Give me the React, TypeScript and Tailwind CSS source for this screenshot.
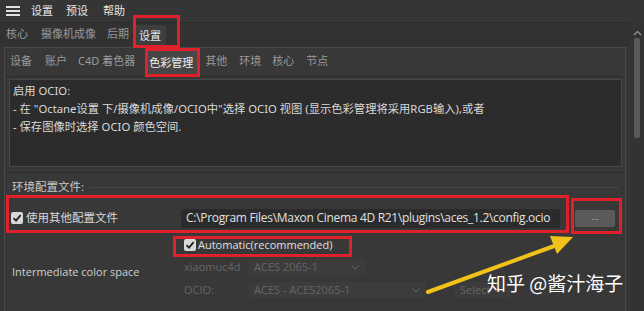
import React from "react";

const cjk = "font-['Microsoft_YaHei','Noto_Sans','Noto_Sans_CJK_SC',sans-serif]";

function Check() {
  return (
    <div className="w-[12px] h-[12px] rounded-[2px] bg-[#d8d8d8] flex items-center justify-center">
      <svg width="10" height="10" viewBox="0 0 10 10">
        <path d="M1.5 5.2 L4 7.6 L8.6 2.2" stroke="#222" strokeWidth="1.8" fill="none" />
      </svg>
    </div>
  );
}

function Chevron() {
  return (
    <svg width="8" height="5" viewBox="0 0 8 5">
      <path d="M0.5 0.5 L4 4 L7.5 0.5" stroke="#6a6a6a" strokeWidth="1" fill="none" />
    </svg>
  );
}

export default function App() {
  return (
    <div className={`w-[644px] h-[311px] bg-[#353535] relative overflow-hidden flex flex-col text-[#d2d2d2] ${cjk}`}>
      {/* menu bar */}
      <div className="h-[22px] flex items-center pl-[6px] text-[11px] text-[#e6e6e6]">
        <div className="flex flex-col gap-[2px] w-[14px] mr-[11px]">
          <div className="h-[2px] bg-[#e0e0e0]" />
          <div className="h-[2px] bg-[#e0e0e0]" />
          <div className="h-[2px] bg-[#e0e0e0]" />
        </div>
        <span className="mr-[13px]">设置</span>
        <span className="mr-[15px]">预设</span>
        <span>帮助</span>
      </div>
      <div className="flex flex-1 min-h-0">
        <div className="flex-1 flex flex-col min-w-0">
          {/* tab row 1 */}
          <div className="h-[25px] border-t border-[#2a2a2a] bg-[#323232] flex items-end pl-[6px] text-[11px] text-[#9a9a9a]">
            <span className="mb-[5px] mr-[13px]">核心</span>
            <span className="mb-[5px] mr-[11px]">摄像机成像</span>
            <span className="mb-[5px] mr-[5px]">后期</span>
            <span className="h-[22px] px-[5px] bg-[#3e3e3e] text-[#e8e8e8] flex items-center">设置</span>
          </div>
          {/* panel */}
          <div className="flex-1 flex flex-col ml-[4px] mr-[4px] border-l border-t border-r border-[#4a4a4a] bg-[#383838]">
            <div className="h-[29px] flex items-end pl-[5px] text-[11px] text-[#9a9a9a] border-b border-[#2c2c2c]">
              <span className="mb-[7px] mr-[13px]">设备</span>
              <span className="mb-[7px] mr-[11px]">账户</span>
              <span className="mb-[7px] mr-[10px]">C4D 着色器</span>
              <span className="h-[25px] px-[4px] bg-[#474747] text-[#f0f0f0] flex items-center mr-[8px]">色彩管理</span>
              <span className="mb-[7px] mr-[12px]">其他</span>
              <span className="mb-[7px] mr-[11px]">环境</span>
              <span className="mb-[7px] mr-[12px]">核心</span>
              <span className="mb-[7px]">节点</span>
            </div>
            <div className="flex flex-col pl-[4px] pr-[3px] pt-[2px]">
              <div className="h-[88px] bg-[#2c2c2c] border border-[#484848] px-[3px] pt-[2px] text-[11.3px] leading-[18px] text-[#d8d8d8]">
                <div>启用 OCIO:</div>
                <div>- 在 "Octane设置 下/摄像机成像/OCIO中"选择 OCIO 视图 (显示色彩管理将采用RGB输入),或者</div>
                <div>- 保存图像时选择 OCIO 颜色空间.</div>
              </div>
            </div>
            <div className="h-[6px] border-b border-[#2e2e2e]" />
            <div className="flex items-center h-[22px] mt-[3px] pl-[7px] text-[11.5px] text-[#c8c8c8]">
              <span>环境配置文件:</span>
              <div className="flex-1 h-px bg-[#454545] ml-[6px] mr-[6px]" />
            </div>
            <div className="flex items-center h-[26px] mt-[7px] pl-[6px]">
              <Check />
              <span className="ml-[3px] text-[11.5px] text-[#d8d8d8] w-[155px]">使用其他配置文件</span>
              <div className="w-[379px] h-[19px] bg-[#2b2b2b] flex items-center pl-[5px] text-[12px] text-[#e0e0e0] font-['Open_Sans',sans-serif] tracking-[-0.3px] whitespace-nowrap overflow-hidden">
                C:\Program Files\Maxon Cinema 4D R21\plugins\aces_1.2\config.ocio
              </div>
              <div className="ml-[15px] w-[40px] h-[17px] rounded-[2px] bg-[#5a5a5a] flex items-center justify-center text-[9px] text-[#bbb] pb-[3px]">...</div>
            </div>
            <div className="flex mt-[5px] pl-[7px] font-['Open_Sans',sans-serif]">
              <div className="w-[172px] flex items-center text-[11px] text-[#cfcfcf] pt-[10px]">Intermediate color space</div>
              <div className="flex flex-col">
                <div className="flex items-center h-[18px]">
                  <Check />
                  <span className="ml-[2px] text-[11px] text-[#e0e0e0]">Automatic(recommended)</span>
                </div>
                <div className="flex items-center h-[16px] mt-[5px] text-[11px] text-[#666]">
                  <span className="w-[64px]">xiaomuc4d</span>
                  <div className="w-[117px] h-[16px] bg-[#3c3c3c] rounded-[2px] flex items-center justify-between pl-[6px] pr-[6px]">
                    <span>ACES 2065-1</span>
                    <Chevron />
                  </div>
                </div>
                <div className="flex items-center h-[16px] mt-[7px] text-[11px] text-[#666]">
                  <span className="w-[64px]">OCIO:</span>
                  <div className="w-[178px] h-[16px] bg-[#3c3c3c] rounded-[2px] flex items-center justify-between pl-[6px] pr-[6px]">
                    <span>ACES - ACES2065-1</span>
                    <Chevron />
                  </div>
                  <div className="ml-[29px] w-[55px] h-[16px] bg-[#3c3c3c] rounded-[2px] flex items-center pl-[5px]">Select</div>
                </div>
              </div>
            </div>
          </div>
        </div>
        {/* scrollbar */}
        <div className="w-[14px] flex flex-col items-center pt-[8px] bg-[#333]">
          <svg width="9" height="6" viewBox="0 0 9 6">
            <path d="M1 5 L4.5 1.5 L8 5" stroke="#9a9a9a" strokeWidth="1.2" fill="none" />
          </svg>
          <div className="w-[6px] h-[100px] mt-[2px] rounded-[2px] bg-[#5a5a5a]" />
        </div>
      </div>

      {/* annotations */}
      <div className="absolute left-[133px] top-[15px] w-[47px] h-[33px] border-[3px] border-[#e0202a]" />
      <div className="absolute left-[145px] top-[48px] w-[55px] h-[29px] border-[3px] border-[#e0202a]" />
      <div className="absolute left-[6px] top-[195px] w-[563px] h-[38px] border-[3px] border-[#e0202a]" />
      <div className="absolute left-[571px] top-[198px] w-[51px] h-[36px] border-[3px] border-[#e0202a]" />
      <div className="absolute left-[173px] top-[236px] w-[179px] h-[21px] border-[3px] border-[#e0202a]" />
      <svg className="absolute left-0 top-0" width="644" height="311" viewBox="0 0 644 311">
        <line x1="428" y1="292" x2="557" y2="245" stroke="#f2c21b" strokeWidth="4" strokeLinecap="round" />
        <polygon points="573,237 550,236 557,254" fill="#f2c21b" />
      </svg>
      <div className="absolute left-[487px] top-[270px] text-[19px] leading-[26px] text-white font-['Noto_Sans_CJK_SC',sans-serif] whitespace-nowrap">
        知乎 @酱汁海子
      </div>
    </div>
  );
}
